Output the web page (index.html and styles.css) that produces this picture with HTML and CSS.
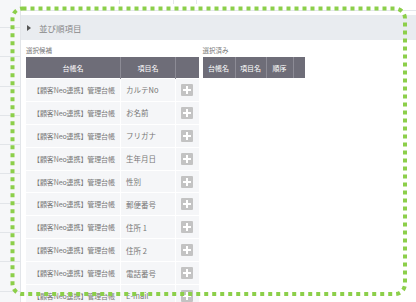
FILE: index.html
```html
<!DOCTYPE html>
<html lang="ja">
<head>
  <meta charset="UTF-8">
  <meta name="viewport" content="width=device-width, initial-scale=1.0">
  <title>並び順項目</title>
  <link rel="stylesheet" href="styles.css">
</head>
<body>
  <div class="page">
    <!-- 左側のメニュー列 -->
    <div class="side">
      <div class="side-row first"></div>
      <div class="side-row"></div>
      <div class="side-row"></div>
      <div class="side-row"></div>
      <div class="side-row"></div>
      <div class="side-row"></div>
      <div class="side-row"></div>
      <div class="side-row"></div>
      <div class="side-row"></div>
      <div class="side-row"></div>
    </div>

    <div class="main">
      <!-- 上のテーブルの終わり -->
      <div class="prev">
        <div class="prev-cells">
          <span class="pc pc-name"></span>
          <span class="pc pc-item"></span>
          <span class="pc pc-add"></span>
        </div>
      </div>

      <div class="section-head">
        <span class="caret"></span>
        <span class="section-title">並び順項目</span>
      </div>

      <div class="section-body">
        <div class="pick">
          <div class="label">選択候補</div>
          <table class="grid grid-left">
            <thead>
              <tr><th class="c-name">台帳名</th><th class="c-item">項目名</th><th class="c-add"></th></tr>
            </thead>
            <tbody id="candidates"></tbody>
          </table>
        </div>

        <div class="pick">
          <div class="label">選択済み</div>
          <table class="grid grid-right">
            <thead>
              <tr><th class="r-name">台帳名</th><th class="r-item">項目名</th><th class="r-order">順序</th><th class="r-op"></th></tr>
            </thead>
            <tbody></tbody>
          </table>
        </div>
      </div>
    </div>
  </div>

  <!-- 強調の点線枠 -->
  <svg class="highlight" width="416" height="302" viewBox="0 0 416 302">
    <rect x="12.5" y="8.5" width="392.5" height="285.5" rx="10" ry="10"
          fill="none" stroke="#8ccf4a" stroke-width="4" stroke-dasharray="4 4"/>
  </svg>

  <script>
    // 選択候補の項目
    const items = ['カルテNo', 'お名前', 'フリガナ', '生年月日', '性別', '郵便番号', '住所 1', '住所 2', '電話番号', 'E-mail'];
    const tbody = document.getElementById('candidates');

    items.forEach(item => {
      const tr = document.createElement('tr');
      tr.innerHTML = `<td class="c-name">【顧客Neo連携】管理台帳</td>
                      <td class="c-item">${item}</td>
                      <td class="c-add"><span class="plus"></span></td>`;
      tbody.appendChild(tr);
    });
  </script>
</body>
</html>
```

FILE: styles.css
```css
body {
  margin: 0;
  font-family: "Noto Sans CJK JP", "Noto Sans", sans-serif;
  background-color: #fff;
  color: #777;
}

.page {
  display: flex;
  width: 416px;
  height: 302px;
  overflow: hidden;
}

.side {
  width: 20px;
  flex-shrink: 0;
  background-color: #f6f7f9;
  border-right: 1px solid #e2e5e9;
}

.side-row {
  height: 28.3px;
  border-bottom: 1px solid #e2e5e9;
}

.side-row.first {
  height: 27px;
}

.main {
  flex: 1;
}

.prev {
  height: 10px;
  border-bottom: 1px solid #e4e7eb;
}

.prev-cells {
  display: flex;
  height: 4px;
  margin-left: 5px;
}

.pc {
  border-right: 1px solid #e4e7eb;
}

.pc-name { width: 93px; }
.pc-item { width: 53px; }
.pc-add { width: 22px; }

.section-head {
  display: flex;
  align-items: center;
  height: 25px;
  margin-top: 4px;
  padding-left: 6px;
  background-color: #e9ecf0;
}

.caret {
  width: 0;
  height: 0;
  border-top: 3px solid transparent;
  border-bottom: 3px solid transparent;
  border-left: 4px solid #555;
  margin-right: 8px;
}

.section-title {
  font-size: 8.5px;
  color: #888;
}

.section-body {
  display: flex;
  gap: 3px;
  padding: 6px 0 0 5px;
}

.label {
  font-size: 6.5px;
  line-height: 9px;
  margin-bottom: 2px;
  color: #777;
}

.grid {
  border-collapse: collapse;
  table-layout: fixed;
}

.grid-left { width: 171px; }
.grid-right { width: 99px; }

.grid th {
  height: 21px;
  padding: 0;
  background-color: #6e6d78;
  color: #fff;
  font-weight: normal;
  font-size: 7px;
  border-left: 1px solid #8c8b95;
  text-align: center;
  overflow: hidden;
}

.grid th:first-child {
  border-left: none;
}

.grid td {
  height: 21.9px;
  padding: 0;
  background-color: #f5f6f8;
  border: 1px solid #fff;
  font-size: 7px;
  color: #777;
  white-space: nowrap;
  overflow: hidden;
}

.grid td:first-child {
  border-left: none;
}

.c-name { width: 94px; }
.c-item { width: 54px; }
.c-add { width: 23px; }

td.c-name {
  padding-left: 7px;
  letter-spacing: -0.1px;
}

td.c-item {
  padding-left: 5px;
  font-size: 7.5px;
}

td.c-add {
  text-align: center;
}

.r-name { width: 32px; }
.r-item { width: 30px; }
.r-order { width: 26px; }
.r-op { width: 11px; }

.plus {
  display: inline-block;
  position: relative;
  width: 12px;
  height: 12px;
  vertical-align: middle;
  background-color: #c3c3c3;
  border-radius: 1px;
}

.plus::before,
.plus::after {
  content: "";
  position: absolute;
  background-color: #fff;
}

.plus::before {
  left: 2px;
  top: 5px;
  width: 8px;
  height: 2px;
}

.plus::after {
  left: 5px;
  top: 2px;
  width: 2px;
  height: 8px;
}

.highlight {
  position: absolute;
  left: 0;
  top: 0;
  pointer-events: none;
}
```
